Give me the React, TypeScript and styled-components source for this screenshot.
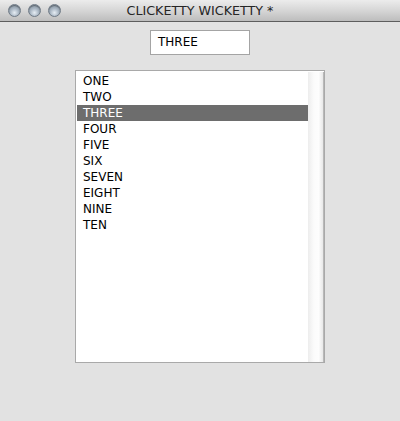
import React from "react";
import styled, { createGlobalStyle } from "styled-components";

const Global = createGlobalStyle`
  html, body { margin: 0; padding: 0; }
  body { background: #e2e2e2; font-family: "DejaVu Sans", sans-serif; }
`;

const Window = styled.div`
  width: 400px;
  height: 421px;
  display: flex;
  flex-direction: column;
  background: #e2e2e2;
  overflow: hidden;
`;

const TitleBar = styled.div`
  height: 21px;
  flex: none;
  display: flex;
  align-items: center;
  position: relative;
  background: linear-gradient(#ececec, #d6d6d6 50%, #bdbdbd);
  border-bottom: 1px solid #5e5e5e;
`;

const Lights = styled.div`
  display: flex;
  gap: 7px;
  padding-left: 8px;
`;

const Light = styled.div`
  width: 13px;
  height: 13px;
  border-radius: 50%;
  box-sizing: border-box;
  border: 1px solid #6f7a86;
  background: radial-gradient(circle at 50% 70%, #e6edf4 0%, #a9b6c3 45%, #7f8c99 100%);
  box-shadow: inset 0 1px 1px rgba(0,0,0,0.35);
`;

const Title = styled.div`
  position: absolute;
  left: 0;
  right: 0;
  text-align: center;
  font-size: 12.7px;
  color: #262626;
  pointer-events: none;
`;

const Content = styled.div`
  display: flex;
  flex-direction: column;
  align-items: center;
  padding-top: 8px;
  gap: 15px;
`;

const TextField = styled.div`
  width: 100px;
  height: 25px;
  box-sizing: border-box;
  border: 1px solid #a4a4a4;
  background: #fff;
  padding: 0 0 2px 7px;
  display: flex;
  align-items: center;
  font-size: 12px;
  color: #000;
`;

const ListBox = styled.div`
  width: 250px;
  height: 293px;
  box-sizing: border-box;
  border: 1px solid #a9a9a9;
  background: #fff;
  display: flex;
  padding: 1px 0 0 1px;
`;

const Items = styled.div`
  flex: 1;
  display: flex;
  flex-direction: column;
  padding-top: 1px;
`;

const Row = styled.div<{ $selected?: boolean }>`
  height: 16px;
  line-height: 16px;
  padding-left: 6px;
  font-size: 12px;
  color: ${(p) => (p.$selected ? "#fff" : "#000")};
  background: ${(p) => (p.$selected ? "#6d6d6d" : "transparent")};
`;

const Scroll = styled.div`
  width: 15px;
  flex: none;
  background: linear-gradient(90deg, #ededed, #fbfbfb 40%, #fdfdfd 70%, #e8e8e8);
  border-right: 1px solid #b8b8b8;
`;

const items = ["ONE", "TWO", "THREE", "FOUR", "FIVE", "SIX", "SEVEN", "EIGHT", "NINE", "TEN"];

export default function App() {
  return (
    <>
      <Global />
      <Window>
        <TitleBar>
          <Lights>
            <Light />
            <Light />
            <Light />
          </Lights>
          <Title>CLICKETTY WICKETTY *</Title>
        </TitleBar>
        <Content>
          <TextField>THREE</TextField>
          <ListBox>
            <Items>
              {items.map((it) => (
                <Row key={it} $selected={it === "THREE"}>
                  {it}
                </Row>
              ))}
            </Items>
            <Scroll />
          </ListBox>
        </Content>
      </Window>
    </>
  );
}
